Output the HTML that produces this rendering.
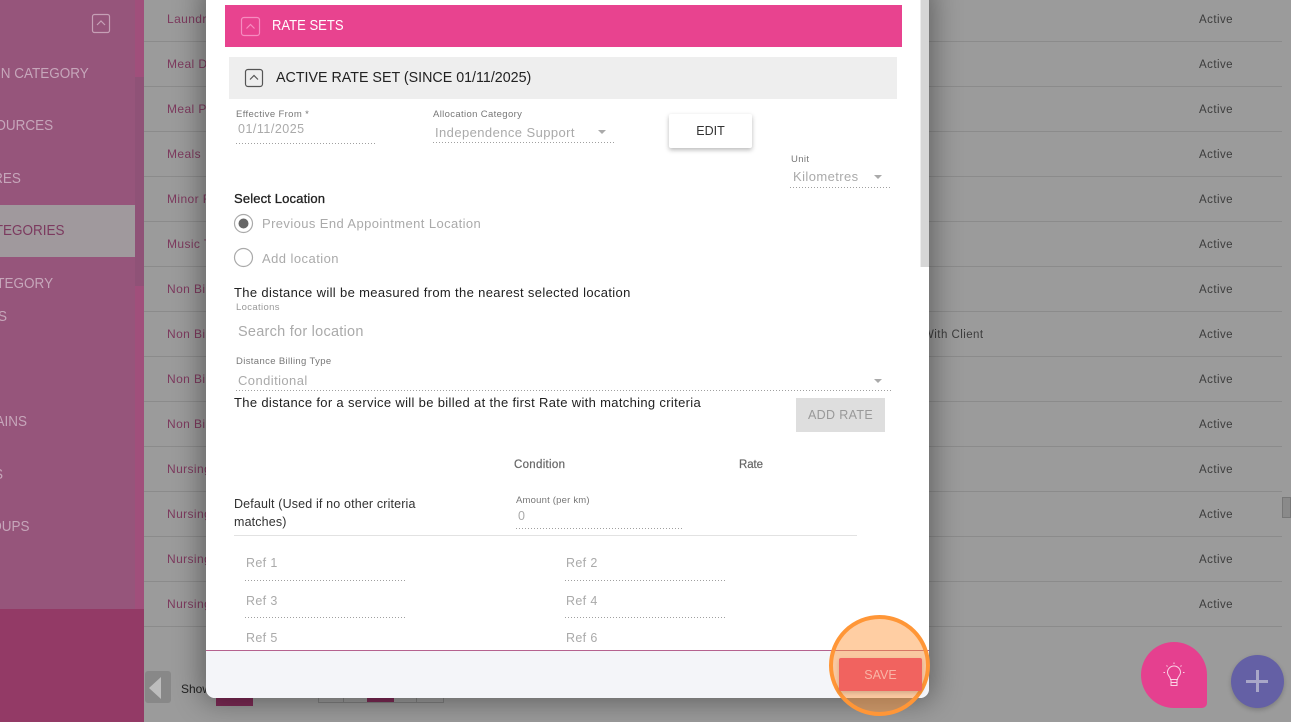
<!DOCTYPE html>
<html><head><meta charset="utf-8"><style>
html,body{margin:0;padding:0;width:1291px;height:722px;overflow:hidden;background:#9b9b9b}
body{position:relative;font-family:"Liberation Sans",sans-serif}
.a,.t{position:absolute}
.t{white-space:nowrap;line-height:16px;margin-top:1px}
.s{left:auto;color:#c6a6ba;font-size:15px;line-height:20px;margin-top:1px;transform:scaleX(.9);transform-origin:right center}
.row{position:absolute;left:144px;width:1138px;height:1px;background:#8b8b8b}
.n{left:167px;font-size:12px;color:#7d3a5e;letter-spacing:.4px}
.st{left:1199px;font-size:11.5px;color:#3c3c3c;letter-spacing:.45px}
.lbl{font-size:9.5px;color:#777;letter-spacing:.36px}
.val{font-size:12.5px;color:#aaa;letter-spacing:.5px}
.blk{font-size:13px;color:#222;letter-spacing:.35px}
.dot{position:absolute;height:1px;background:repeating-linear-gradient(90deg,#a0a0a0 0 1px,transparent 1px 3px)}
.car{position:absolute;width:0;height:0;border-left:4.500px solid transparent;border-right:4.500px solid transparent;border-top:4px solid #aaa}
</style></head><body>

<div class="a" style="left:0;top:0;width:144px;height:609px;background:#96557b"></div>
<div class="a" style="left:135px;top:0;width:9px;height:609px;background:#a04f7b"></div>
<div class="a" style="left:135px;top:77px;width:9px;height:209px;background:#8f5277"></div>
<div class="a" style="left:0;top:205px;width:135px;height:52px;background:#a0999d"></div>
<div class="a" style="left:0;top:609px;width:144px;height:113px;background:#933a66"></div>
<svg class="a" style="left:91px;top:13px" width="20" height="21"><rect x="1.500" y="1.500" width="17" height="18" rx="2" fill="none" stroke="#c6a0b6" stroke-width="1.200"/><path d="M6 12l4-4 4 4" fill="none" stroke="#c6a0b6" stroke-width="1.200"/></svg>
<div class="t s" style="right:1202px;top:63px">N CATEGORY</div>
<div class="t s" style="right:1238px;top:115px">OURCES</div>
<div class="t s" style="right:1270px;top:168px">RES</div>
<div class="t s" style="right:1226px;top:220px;color:#7c3a5f">TEGORIES</div>
<div class="t s" style="right:1238px;top:273px">TEGORY</div>
<div class="t s" style="right:1284px;top:306px">S</div>
<div class="t s" style="right:1264px;top:411px">AINS</div>
<div class="t s" style="right:1288px;top:464px">S</div>
<div class="t s" style="right:1261px;top:516px">OUPS</div>

<div class="row" style="top:41px"></div><div class="row" style="top:86px"></div><div class="row" style="top:131px"></div><div class="row" style="top:176px"></div><div class="row" style="top:221px"></div><div class="row" style="top:266px"></div><div class="row" style="top:311px"></div><div class="row" style="top:356px"></div><div class="row" style="top:401px"></div><div class="row" style="top:446px"></div><div class="row" style="top:491px"></div><div class="row" style="top:536px"></div><div class="row" style="top:581px"></div><div class="row" style="top:626px"></div>

<div class="t n" style="top:10px">Laundry</div><div class="t n" style="top:55px">Meal Delivery</div><div class="t n" style="top:100px">Meal Prep</div><div class="t n" style="top:145px">Meals</div><div class="t n" style="top:190px">Minor Repairs</div><div class="t n" style="top:235px">Music Therapy</div><div class="t n" style="top:280px">Non Billable</div><div class="t n" style="top:325px">Non Billable</div><div class="t n" style="top:370px">Non Billable</div><div class="t n" style="top:415px">Non Billable</div><div class="t n" style="top:460px">Nursing</div><div class="t n" style="top:505px">Nursing</div><div class="t n" style="top:550px">Nursing</div><div class="t n" style="top:595px">Nursing</div>

<div class="t st" style="top:11px">Active</div><div class="t st" style="top:56px">Active</div><div class="t st" style="top:101px">Active</div><div class="t st" style="top:146px">Active</div><div class="t st" style="top:191px">Active</div><div class="t st" style="top:236px">Active</div><div class="t st" style="top:281px">Active</div><div class="t st" style="top:326px">Active</div><div class="t st" style="top:371px">Active</div><div class="t st" style="top:416px">Active</div><div class="t st" style="top:461px">Active</div><div class="t st" style="top:506px">Active</div><div class="t st" style="top:551px">Active</div><div class="t st" style="top:596px">Active</div>
<div class="t st" style="left:923px;top:326px">With Client</div>

<div class="a" style="left:1282px;top:497px;width:9px;height:21px;background:#8a8a8a;border:1px solid #777;box-sizing:border-box"></div>

<div class="a" style="left:145px;top:671px;width:26px;height:32px;border-radius:3px;background:#888"></div>
<div class="a" style="left:149px;top:677px;width:0;height:0;border-top:11px solid transparent;border-bottom:11px solid transparent;border-right:12px solid #bdbdbd"></div>
<div class="t" style="left:181px;top:680px;font-size:12px;color:#222">Show</div>
<div class="a" style="left:216px;top:690px;width:37px;height:16px;background:#7d2a55"></div>
<div class="a" style="left:318px;top:690px;width:124px;height:11px;border:1px solid #808080"></div>
<div class="a" style="left:343px;top:690px;width:1px;height:12px;background:#808080"></div>
<div class="a" style="left:416px;top:690px;width:1px;height:12px;background:#808080"></div>
<div class="a" style="left:367px;top:690px;width:27px;height:12px;background:#7d2a55"></div>

<div class="a" style="left:206px;top:-10px;width:723px;height:708px;background:#fff;border-radius:0 0 9px 9px;box-shadow:0 0 28px 4px rgba(0,0,0,.38);overflow:hidden">
  <div class="a" style="left:0;top:660px;width:723px;height:48px;background:#f4f5f9;border-top:1px solid #b5628f;box-sizing:border-box"></div>
</div>
<div class="a" style="left:920px;top:0;width:9px;height:267px;background:#d6d6d6;border-left:1px solid #ececec;box-sizing:border-box"></div>

<div class="a" style="left:225px;top:5px;width:677px;height:42px;background:#e8438f"></div>
<svg class="a" style="left:240px;top:16px" width="21" height="21"><rect x="1.500" y="1.500" width="18" height="18" rx="2.500" fill="none" stroke="#f68cc0" stroke-width="1.200"/><path d="M6.500 12.500l4-4 4 4" fill="none" stroke="#f68cc0" stroke-width="1.200"/></svg>
<div class="t" style="left:272px;top:17px;font-size:15px;color:#fff;transform:scaleX(.87);transform-origin:left center">RATE SETS</div>

<div class="a" style="left:229px;top:57px;width:668px;height:42px;background:#eeeeee"></div>
<svg class="a" style="left:244px;top:68px" width="20" height="20"><rect x="1.500" y="1.500" width="17" height="17" rx="2.500" fill="none" stroke="#555" stroke-width="1.200"/><path d="M6 11.500l4-4 4 4" fill="none" stroke="#555" stroke-width="1.200"/></svg>
<div class="t" style="left:276px;top:69px;font-size:15px;color:#222;transform:scaleX(.951);transform-origin:left center">ACTIVE RATE SET (SINCE 01/11/2025)</div>

<div class="t lbl" style="left:236px;top:106px">Effective From *</div>
<div class="t val" style="left:238px;top:120px">01/11/2025</div>
<div class="dot" style="left:236px;top:143px;width:141px"></div>

<div class="t lbl" style="left:433px;top:106px">Allocation Category</div>
<div class="t val" style="left:435px;top:124px;font-size:13px;letter-spacing:.42px">Independence Support</div>
<div class="car" style="left:598px;top:130px"></div>
<div class="dot" style="left:433px;top:142px;width:182px"></div>

<div class="a" style="left:669px;top:114px;width:83px;height:34px;background:#fff;border-radius:2px;box-shadow:0 2px 5px rgba(0,0,0,.28)"></div>
<div class="t" style="left:669px;top:122px;width:83px;text-align:center;font-size:12.500px;color:#333">EDIT</div>

<div class="t lbl" style="left:791px;top:151px">Unit</div>
<div class="t val" style="left:793px;top:168px;font-size:13px;letter-spacing:.42px">Kilometres</div>
<div class="car" style="left:874px;top:175px"></div>
<div class="dot" style="left:790px;top:187px;width:101px"></div>

<div class="t" style="left:234px;top:190px;font-size:13px;color:#222;letter-spacing:.15px;-webkit-text-stroke:.3px #222">Select Location</div>
<svg class="a" style="left:233px;top:213px" width="21" height="21"><circle cx="10.500" cy="10.500" r="9" fill="none" stroke="#aaa" stroke-width="1.200"/><circle cx="10.500" cy="10.500" r="5" fill="#666"/></svg>
<div class="t val" style="left:262px;top:215px;font-size:13px;letter-spacing:.4px">Previous End Appointment Location</div>
<svg class="a" style="left:233px;top:247px" width="21" height="21"><circle cx="10.500" cy="10.500" r="9" fill="none" stroke="#aaa" stroke-width="1.200"/></svg>
<div class="t val" style="left:262px;top:250px;font-size:13px;letter-spacing:.45px">Add location</div>

<div class="t blk" style="left:234px;top:284px">The distance will be measured from the nearest selected location</div>
<div class="t lbl" style="left:236px;top:299px;color:#999">Locations</div>
<div class="t val" style="left:238px;top:323px;font-size:14.500px;letter-spacing:.25px">Search for location</div>
<div class="t lbl" style="left:236px;top:353px">Distance Billing Type</div>
<div class="t val" style="left:238px;top:372px;font-size:13px;letter-spacing:.42px">Conditional</div>
<div class="car" style="left:874px;top:379px"></div>
<div class="dot" style="left:236px;top:390px;width:655px"></div>
<div class="t blk" style="left:234px;top:394px;letter-spacing:.33px">The distance for a service will be billed at the first Rate with matching criteria</div>

<div class="a" style="left:796px;top:398px;width:89px;height:34px;background:#dedede"></div>
<div class="t" style="left:796px;top:406px;width:89px;text-align:center;font-size:12.500px;color:#999;letter-spacing:.35px">ADD RATE</div>

<div class="t" style="left:514px;top:456px;font-size:11.500px;color:#666;letter-spacing:.3px;-webkit-text-stroke:.2px #666">Condition</div>
<div class="t" style="left:739px;top:456px;font-size:11.500px;color:#666;letter-spacing:-.1px;-webkit-text-stroke:.2px #666">Rate</div>

<div class="t" style="left:234px;top:495px;font-size:12.500px;color:#333;letter-spacing:.15px">Default (Used if no other criteria</div>
<div class="t" style="left:234px;top:513px;font-size:12.500px;color:#333;letter-spacing:.15px">matches)</div>
<div class="t lbl" style="left:516px;top:492px;letter-spacing:.2px">Amount (per km)</div>
<div class="t val" style="left:518px;top:507px">0</div>
<div class="dot" style="left:516px;top:528px;width:167px"></div>
<div class="a" style="left:234px;top:535px;width:623px;height:1px;background:#e2e2e2"></div>

<div class="t val" style="left:246px;top:554px;letter-spacing:.35px">Ref 1</div>
<div class="t val" style="left:566px;top:554px;letter-spacing:.35px">Ref 2</div>
<div class="dot" style="left:245px;top:580px;width:160px"></div>
<div class="dot" style="left:565px;top:580px;width:160px"></div>
<div class="t val" style="left:246px;top:592px;letter-spacing:.35px">Ref 3</div>
<div class="t val" style="left:566px;top:592px;letter-spacing:.35px">Ref 4</div>
<div class="dot" style="left:245px;top:617px;width:160px"></div>
<div class="dot" style="left:565px;top:617px;width:160px"></div>
<div class="t val" style="left:246px;top:629px;letter-spacing:.35px">Ref 5</div>
<div class="t val" style="left:566px;top:629px;letter-spacing:.35px">Ref 6</div>

<div class="a" style="left:829px;top:615px;width:101px;height:101px;box-sizing:border-box;border:4px solid #ff9637;border-radius:50%;background:rgba(255,146,51,.45)"></div>

<div class="a" style="left:839px;top:658px;width:83px;height:33px;background:#f1635f;border-radius:2px;box-shadow:0 2px 4px rgba(0,0,0,.15)"></div>
<div class="t" style="left:839px;top:666px;width:83px;text-align:center;font-size:12.500px;color:#f9b4a6">SAVE</div>

<div class="a" style="left:1141px;top:642px;width:66px;height:66px;background:#e5408f;border-radius:50% 50% 5px 50%"></div>
<svg class="a" style="left:1161px;top:662px" width="26" height="26" fill="none" stroke="#fbd3e6" stroke-width="1"><path d="M9.500 17.500c0-3-3-3.500-3-7a6.500 6.500 0 0 1 13 0c0 3.500-3 4-3 7z"/><path d="M10 18v5.500h6V18M10 20.500h6"/><path d="M13 .5v1.500M5.500 3.500l1 1M20.500 3.500l-1 1M2.500 10.500h1.500M22 10.500h1.500"/></svg>

<div class="a" style="left:1231px;top:655px;width:53px;height:53px;border-radius:50%;background:#6460a5;box-shadow:0 2px 5px rgba(0,0,0,.2)"></div>
<div class="a" style="left:1246px;top:679.500px;width:22px;height:3px;background:#a9a7c8"></div>
<div class="a" style="left:1255.500px;top:670px;width:3px;height:22px;background:#a9a7c8"></div>
</body></html>
